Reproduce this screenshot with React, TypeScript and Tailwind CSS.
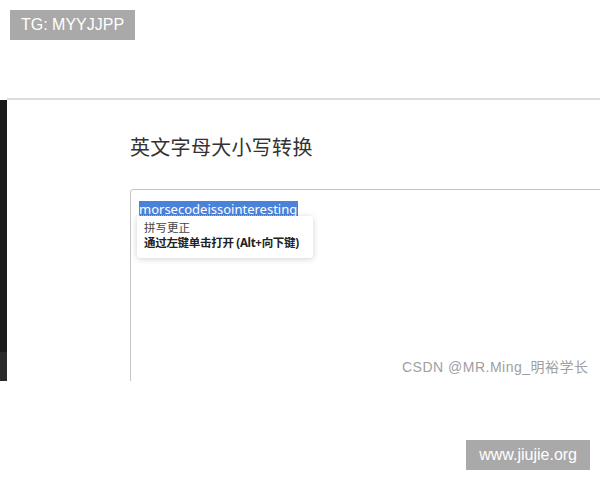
import React from "react";

const cjk = { fontFamily: '"Noto Sans", "Noto Sans CJK SC", sans-serif' };
const badge = { fontFamily: '"Liberation Sans", "Noto Sans CJK SC", sans-serif' };

export default function App() {
  return (
    <div className="w-[600px] h-[480px] bg-white overflow-hidden flex flex-col" style={cjk}>
      {/* top strip with the tag */}
      <div className="h-[98px] pt-[10px] pl-[10px]">
        <div className="inline-flex items-center h-[30px] px-[11px] bg-[#a9a9a9] text-white text-[16px]" style={badge}>
          TG: MYYJJPP
        </div>
      </div>
      <div className="h-[2px] bg-[#dcdcdc] ml-[7px]" />

      {/* screenshot area */}
      <div className="h-[281px] flex">
        <div className="w-[7px] flex flex-col">
          <div className="flex-1 bg-[#1b1b1b]" />
          <div className="h-[29px] bg-[#2a2a2a]" />
        </div>
        <div className="flex-1 relative overflow-hidden">
          <div className="pl-[123px] pt-[34px]">
            <h1 className="text-[20px] leading-[28px] text-[#333] tracking-[0.3px]">英文字母大小写转换</h1>
            <div className="mt-[27px] w-[520px] h-[200px] border border-[#c4c4c4] rounded-[3px] pt-[6px] pl-[8px]">
              <span className="bg-[#4a82db] text-white text-[13px] leading-[16px] underline decoration-dotted decoration-[#9bb8ee] underline-offset-1 inline-block pr-[1px]">
                morsecodeissointeresting
              </span>
            </div>
          </div>
          <div className="absolute left-[130px] top-[116px] w-[176px] h-[42px] bg-white rounded-[3px] shadow-[0_1px_6px_rgba(0,0,0,0.18)] px-[7px] pt-[4px] text-[11.5px] leading-[15px] text-[#222] whitespace-nowrap">
            <div className="text-[#444]">拼写更正</div>
            <div className="font-bold tracking-[-0.3px]">通过左键单击打开 (Alt+向下键)</div>
          </div>
          <div className="absolute left-[395px] top-[257px] text-[14px] tracking-[0.5px] text-[#a0a0a0]" style={badge}>
            CSDN @MR.Ming_明裕学长
          </div>
        </div>
      </div>

      {/* bottom strip with site tag */}
      <div className="flex-1 flex justify-end items-start pt-[59px] pr-[10px]">
        <div className="inline-flex items-center h-[30px] px-[13px] bg-[#a9a9a9] text-white text-[16px]" style={badge}>
          www.jiujie.org
        </div>
      </div>
    </div>
  );
}
